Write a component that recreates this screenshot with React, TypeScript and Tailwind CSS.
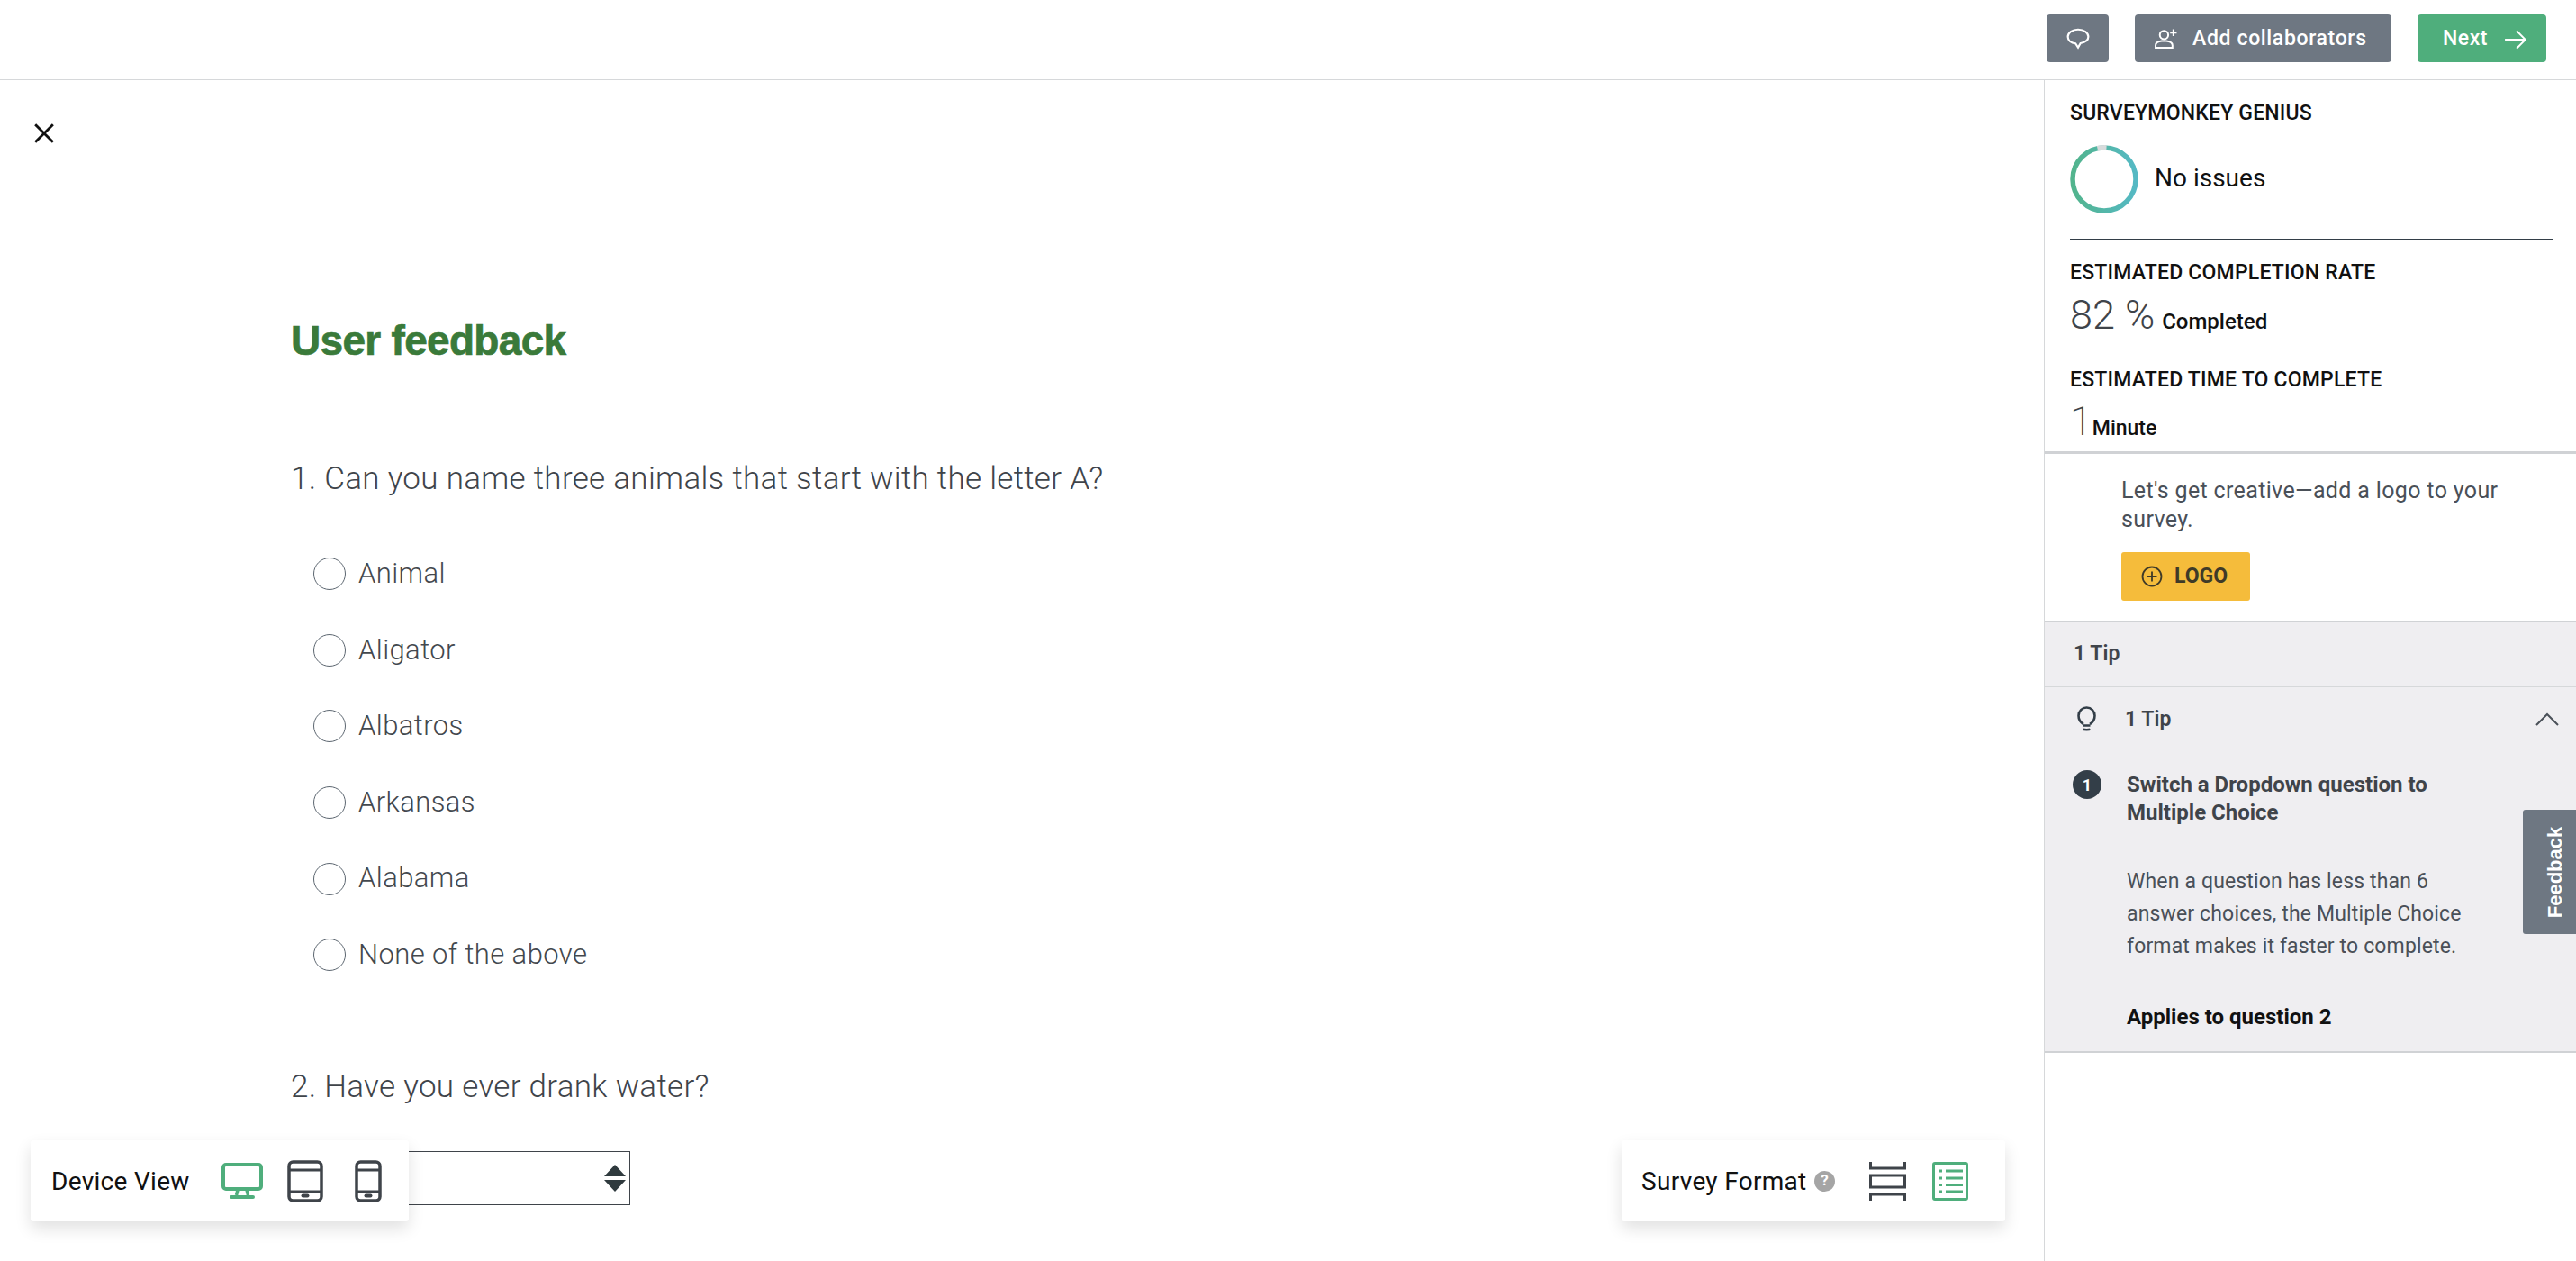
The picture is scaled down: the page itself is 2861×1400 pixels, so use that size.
import React from "react";

const sans = "font-['Roboto','Liberation_Sans',sans-serif]";

function Radio({ label }: { label: string }) {
  return (
    <div className="flex items-center h-[84.6px] pl-[25px]">
      <span className="w-[36px] h-[36px] rounded-full border border-[#5c6670] shrink-0" />
      <span className="ml-[14px] text-[31px] font-light text-[#43484e] tracking-[0.4px]">{label}</span>
    </div>
  );
}

function Monitor({ className }: { className?: string }) {
  return (
    <svg viewBox="0 0 46 40" className={className} fill="none">
      <rect x="2" y="2" width="42" height="27" rx="3" stroke="#4fae7c" strokeWidth="4" />
      <path d="M18 30l-1.500 6M28 30l1.500 6" stroke="#4fae7c" strokeWidth="3.500" />
      <path d="M11 38h24" stroke="#4fae7c" strokeWidth="4" strokeLinecap="round" />
    </svg>
  );
}

function Device({ w, className }: { w: number; className?: string }) {
  const vb = `0 0 ${w} 47`;
  return (
    <svg viewBox={vb} className={className} fill="none">
      <rect x="2" y="2" width={w - 4} height="43" rx="4.500" stroke="#3f444a" strokeWidth="3.500" />
      <rect x="2" y="9.500" width={w - 4} height="3" fill="#3f444a" />
      <rect x="2" y="33.500" width={w - 4} height="3" fill="#3f444a" />
      <rect x={w / 2 - 4.5} y="37.500" width="9" height="4" rx="2" fill="#3f444a" />
    </svg>
  );
}

export default function App() {
  return (
    <div className={`${sans} flex flex-col h-[1400px] w-full overflow-hidden bg-white relative`}>
      <header className="h-[89px] shrink-0 border-b border-[#d6d8da] flex items-start justify-end pt-[16px] pr-[33px] gap-[29px]">
        <button className="w-[69px] h-[53px] rounded-[4px] bg-[#6e7782] flex items-center justify-center">
          <svg viewBox="0 0 24 22" className="w-[26px] h-[24px]" fill="none" stroke="white" strokeWidth="2">
            <path d="M12 1.500C6 1.500 1.500 4.700 1.500 9c0 3.800 3.400 6.400 8 7l2.500 4 2.500-4.400c4.500-.8 8-3.200 8-6.600 0-4.300-4.500-7.500-10.500-7.500z" />
          </svg>
        </button>
        <button className="w-[285px] h-[53px] rounded-[4px] bg-[#6e7782] flex items-center pl-[22px] text-white">
          <svg viewBox="0 0 24 21" className="w-[25px] h-[22px]" fill="none" stroke="white" strokeWidth="1.900">
            <circle cx="10" cy="6.500" r="4.500" />
            <path d="M1 20v-2.500c0-2.500 3-4 6.500-4.500h5c3.500.5 6.500 2 6.500 4.500V20z" />
            <path d="M20 0.500v7M16.500 4h7" />
          </svg>
          <span className="ml-[17px] mt-[2px] text-[23px] font-medium tracking-[0.65px]">Add collaborators</span>
        </button>
        <button className="w-[143px] h-[53px] rounded-[4px] bg-[#4fae7c] flex items-center pl-[28px] text-white">
          <span className="mt-[2px] text-[23px] font-medium tracking-[0.5px]">Next</span>
          <svg viewBox="0 0 24 24" className="ml-[18px] mt-[2px] w-[26px] h-[26px]" fill="none" stroke="white" strokeWidth="1.700">
            <path d="M1 12h21M13 3l9 9-9 9" />
          </svg>
        </button>
      </header>

      <div className="flex flex-1 min-h-0">
        <main className="flex-1 relative pl-[323px]">
          <svg viewBox="0 0 22 22" className="absolute left-[37px] top-[47px] w-[24px] h-[24px]" fill="none" stroke="#111" strokeWidth="2.600">
            <path d="M2 2l18 18M20 2L2 20" />
          </svg>
          <h1 className="mt-[262px] text-[46px] leading-[54px] font-['Liberation_Sans'] font-bold text-[#3a7a3a] tracking-[-0.7px] [-webkit-text-stroke:0.7px_#3a7a3a]">User feedback</h1>
          <h2 className="mt-[105px] text-[35px] leading-[44px] font-light text-[#3f444a] tracking-[0.3px]">1. Can you name three animals that start with the letter A?</h2>
          <div className="mt-[41px]">
            {["Animal", "Aligator", "Albatros", "Arkansas", "Alabama", "None of the above"].map((l) => (
              <Radio key={l} label={l} />
            ))}
          </div>
          <h2 className="mt-[82px] text-[35px] leading-[44px] font-light text-[#3f444a] tracking-[0.3px]">2. Have you ever drank water?</h2>
          <div className="mt-[49px] w-[377px] h-[60px] border-[1.5px] border-[#3f444a] relative">
            <svg viewBox="0 0 24 30" className="absolute right-[4px] top-[14px] w-[24px] h-[30px]" fill="#2f3a3e">
              <path d="M12 0l12 13H0zM0 17h24L12 30z" />
            </svg>
          </div>

          <div className="absolute left-[34px] top-[1177px] w-[420px] h-[90px] bg-white rounded-[3px] shadow-[0_8px_18px_rgba(0,0,0,0.12)] flex items-center pl-[23px]">
            <span className="mt-[2px] text-[28px] text-[#111] w-[152px] whitespace-nowrap tracking-[0.3px]">Device View</span>
            <Monitor className="ml-[37px] w-[46px] h-[40px]" />
            <Device w={40} className="ml-[27px] w-[40px] h-[47px]" />
            <Device w={30} className="ml-[35px] w-[30px] h-[47px]" />
          </div>

          <div className="absolute left-[1801px] top-[1177px] w-[426px] h-[90px] bg-white rounded-[3px] shadow-[0_8px_18px_rgba(0,0,0,0.12)] flex items-center pl-[22px]">
            <span className="mt-[2px] text-[28px] text-[#111] w-[185px] whitespace-nowrap tracking-[0.3px]">Survey Format</span>
            <span className="ml-[7px] w-[23px] h-[23px] rounded-full bg-[#a5a5a5] text-white text-[17px] font-bold flex items-center justify-center">?</span>
            <svg viewBox="0 0 41 43" className="ml-[38px] w-[41px] h-[43px]" fill="none" stroke="#3f444a" strokeWidth="3">
              <path d="M1.500 0v7h38V0M1.500 43v-7h38v7" />
              <rect x="1.500" y="15" width="38" height="13" />
            </svg>
            <svg viewBox="0 0 40 43" className="ml-[29px] w-[40px] h-[43px]" fill="none" stroke="#4fae7c">
              <rect x="1.500" y="1.500" width="37" height="40" rx="1.500" strokeWidth="3" />
              <path d="M15 10h19M15 18h19M15 25.500h19M15 33h19" strokeWidth="3" />
              <path d="M8 10h3M8 18h3M8 25.500h3M8 33h3" strokeWidth="3" />
            </svg>
          </div>
        </main>

        <aside className="w-[591px] shrink-0 border-l border-[#d6d8da] flex flex-col">
          <section className="h-[415px] shrink-0 border-b-[3px] border-[#d0d2d5] pl-[28px] pt-[25px] text-[#111]">
            <div className="text-[23px] leading-[24px] font-medium tracking-[0.2px]">SURVEYMONKEY GENIUS</div>
            <div className="mt-[23px] flex items-center">
              <svg viewBox="0 0 76 76" className="w-[76px] h-[76px]">
                <defs>
                  <linearGradient id="ring" x1="0" y1="0" x2="1" y2="0">
                    <stop offset="0" stopColor="#52b48d" />
                    <stop offset="1" stopColor="#55b9c4" />
                  </linearGradient>
                </defs>
                <circle cx="38" cy="38" r="35" fill="none" stroke="url(#ring)" strokeWidth="5.500" />
                <path d="M30.500 3.800a35 35 0 0 1 10-.9" fill="none" stroke="#d8dbdc" strokeWidth="5.500" />
              </svg>
              <span className="ml-[18px] -mt-[2px] text-[28px]">No issues</span>
            </div>
            <div className="mt-[28px] mr-[25px] h-[1px] bg-[#333e48]" />
            <div className="mt-[25px] text-[23px] leading-[24px] font-medium tracking-[0.2px]">ESTIMATED COMPLETION RATE</div>
            <div className="mt-[1px] flex items-baseline h-[50px]">
              <span className="text-[45px] font-light text-[#3f444a]">82 %</span>
              <span className="ml-[8px] text-[24px] font-medium">Completed</span>
            </div>
            <div className="mt-[44px] text-[23px] leading-[24px] font-medium tracking-[0.2px]">ESTIMATED TIME TO COMPLETE</div>
            <div className="flex items-baseline h-[50px]">
              <span className="text-[45px] font-extralight text-[#3f444a]">1</span>
              <span className="text-[23px] font-medium">Minute</span>
            </div>
          </section>

          <section className="h-[185px] shrink-0 pl-[85px] pt-[25px]">
            <p className="w-[440px] text-[25px] leading-[32px] text-[#4a5058] tracking-[0.35px]">Let's get creative—add a logo to your survey.</p>
            <button className="mt-[20px] w-[143px] h-[54px] rounded-[3px] bg-[#f5bc3b] flex items-center pl-[22px] text-[#3f3a28]">
              <svg viewBox="0 0 24 24" className="w-[24px] h-[24px]" fill="none" stroke="currentColor" strokeWidth="1.800">
                <circle cx="12" cy="12" r="10.500" />
                <path d="M12 6.500v11M6.500 12h11" />
              </svg>
              <span className="ml-[13px] text-[23px] font-bold">LOGO</span>
            </button>
          </section>

          <section className="h-[480px] shrink-0 bg-[#efeef1] border-t-2 border-b-2 border-[#d0d2d5] flex flex-col">
            <div className="h-[72px] shrink-0 border-b border-[#d6d8da] pl-[32px] flex items-center text-[23px] font-semibold text-[#3f444a]">1 Tip</div>
            <div className="h-[72px] shrink-0 flex items-center pl-[36px] pr-[19px]">
              <svg viewBox="0 0 21 29" className="-mt-[3px] w-[21px] h-[29px]" fill="none" stroke="#333e48" strokeWidth="2.600">
                <path d="M7 21C3.500 19 1.500 16 1.500 11.500a9 9 0 0 1 18 0C19.500 16 17.500 19 14 21" />
                <path d="M6.500 22.500h8M6.500 26.500c1 1 7 1 8 0" />
              </svg>
              <span className="ml-[32px] flex-1 text-[23px] font-semibold text-[#3f444a]">1 Tip</span>
              <svg viewBox="0 0 26 16" className="w-[26px] h-[16px]" fill="none" stroke="#4a5058" strokeWidth="2">
                <path d="M1 14L13 2l12 12" />
              </svg>
            </div>
            <div className="flex pl-[31px] pt-[21px]">
              <span className="-mt-[1px] w-[32px] h-[32px] rounded-full bg-[#333e48] text-white text-[18px] font-bold flex items-center justify-center shrink-0">1</span>
              <div className="ml-[28px] w-[420px]">
                <div className="text-[24px] leading-[31px] font-bold text-[#3f444a] w-[360px]">Switch a Dropdown question to Multiple Choice</div>
                <p className="mt-[43px] w-[410px] text-[23px] leading-[36px] text-[#4a5058] tracking-[0.15px]">When a question has less than 6 answer choices, the Multiple Choice format makes it faster to complete.</p>
                <div className="mt-[44px] text-[24px] leading-[32px] font-bold text-[#111]">Applies to question 2</div>
              </div>
            </div>
          </section>
        </aside>
      </div>

      <div className="absolute right-0 top-[899px] w-[59px] h-[138px] rounded-l-[3px] bg-[#6e7782] flex items-center justify-center">
        <span className="-rotate-90 translate-x-[6px] text-white text-[22px] font-['Liberation_Sans'] font-bold">Feedback</span>
      </div>
    </div>
  );
}
